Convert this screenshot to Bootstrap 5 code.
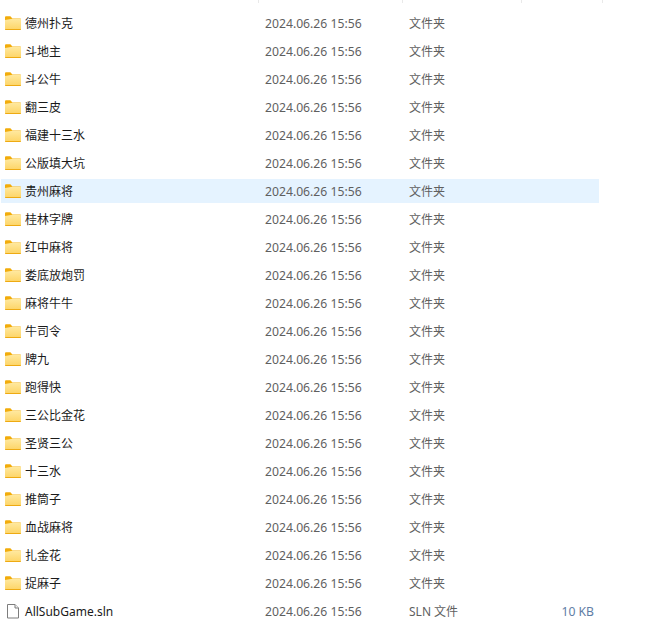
<!DOCTYPE html>
<html lang="zh"><head><meta charset="utf-8"><title>AllSubGame</title>
<link href="https://cdn.jsdelivr.net/npm/bootstrap@5.3.0/dist/css/bootstrap.min.css" rel="stylesheet">
<style>
html,body{height:625px;overflow:hidden;background:#fff}
body{font-family:"Noto Sans","Noto Sans CJK SC",sans-serif;font-size:12px;line-height:24px}
.hdr{height:3px}
.hdr span{display:block;border-right:1px solid #e9e9e9;height:3px}
.h1{width:259px}.h2{width:144px}.h3{width:119px}.h4{width:81px}
.lst{margin:8px 0 0 1px;width:598px;gap:4px}
.rw{height:24px;flex:none}
.rw.sel{background:#e5f3ff}
.cn{width:264px;padding-left:4px;color:#1a1a1a;gap:4px}
.cn svg{flex:none}
.cd{width:144px;color:#5f5f5f;font-size:12.2px;padding-top:1px}
.ct{width:120px;color:#5f5f5f;padding-top:1px}
.cs{width:65px;color:#5f7ea5;text-align:right;font-size:12.2px;padding-top:1px}
.nm{padding-top:2px}
</style></head><body>
<svg width="0" height="0" class="position-absolute"><defs>
<linearGradient id="fg" x1="0" y1="0" x2="0" y2="1"><stop offset="0" stop-color="#ffe9a0"/><stop offset="1" stop-color="#fdd465"/></linearGradient>
<symbol id="fold" viewBox="0 0 16 14"><path d="M0 1.500C0 .7.5.2 1.200.2h4.200l2 2.200H15c.6 0 1 .4 1 1V5H0z" fill="#f2ac0a"/><path d="M0 4l6-.9 1.500-.4H15.200c.5 0 .8.300.8.800V12.800c0 .7-.5 1.200-1.200 1.200H1.200C.5 14 0 13.500 0 12.800z" fill="url(#fg)"/><path d="M0 13h16c0 .6-.5 1-1.200 1H1.200C.5 14 0 13.600 0 13z" fill="#eeaa12"/></symbol>
</defs></svg>
<div class="hdr d-flex"><span class="h1"></span><span class="h2"></span><span class="h3"></span><span class="h4"></span></div>
<div class="lst d-flex flex-column">
<div class="rw d-flex"><div class="cn d-flex align-items-center"><svg width="16" height="14"><use href="#fold"/></svg><span class="nm">德州扑克</span></div><div class="cd">2024.06.26 15:56</div><div class="ct">文件夹</div></div>
<div class="rw d-flex"><div class="cn d-flex align-items-center"><svg width="16" height="14"><use href="#fold"/></svg><span class="nm">斗地主</span></div><div class="cd">2024.06.26 15:56</div><div class="ct">文件夹</div></div>
<div class="rw d-flex"><div class="cn d-flex align-items-center"><svg width="16" height="14"><use href="#fold"/></svg><span class="nm">斗公牛</span></div><div class="cd">2024.06.26 15:56</div><div class="ct">文件夹</div></div>
<div class="rw d-flex"><div class="cn d-flex align-items-center"><svg width="16" height="14"><use href="#fold"/></svg><span class="nm">翻三皮</span></div><div class="cd">2024.06.26 15:56</div><div class="ct">文件夹</div></div>
<div class="rw d-flex"><div class="cn d-flex align-items-center"><svg width="16" height="14"><use href="#fold"/></svg><span class="nm">福建十三水</span></div><div class="cd">2024.06.26 15:56</div><div class="ct">文件夹</div></div>
<div class="rw d-flex"><div class="cn d-flex align-items-center"><svg width="16" height="14"><use href="#fold"/></svg><span class="nm">公版填大坑</span></div><div class="cd">2024.06.26 15:56</div><div class="ct">文件夹</div></div>
<div class="rw sel d-flex"><div class="cn d-flex align-items-center"><svg width="16" height="14"><use href="#fold"/></svg><span class="nm">贵州麻将</span></div><div class="cd">2024.06.26 15:56</div><div class="ct">文件夹</div></div>
<div class="rw d-flex"><div class="cn d-flex align-items-center"><svg width="16" height="14"><use href="#fold"/></svg><span class="nm">桂林字牌</span></div><div class="cd">2024.06.26 15:56</div><div class="ct">文件夹</div></div>
<div class="rw d-flex"><div class="cn d-flex align-items-center"><svg width="16" height="14"><use href="#fold"/></svg><span class="nm">红中麻将</span></div><div class="cd">2024.06.26 15:56</div><div class="ct">文件夹</div></div>
<div class="rw d-flex"><div class="cn d-flex align-items-center"><svg width="16" height="14"><use href="#fold"/></svg><span class="nm">娄底放炮罚</span></div><div class="cd">2024.06.26 15:56</div><div class="ct">文件夹</div></div>
<div class="rw d-flex"><div class="cn d-flex align-items-center"><svg width="16" height="14"><use href="#fold"/></svg><span class="nm">麻将牛牛</span></div><div class="cd">2024.06.26 15:56</div><div class="ct">文件夹</div></div>
<div class="rw d-flex"><div class="cn d-flex align-items-center"><svg width="16" height="14"><use href="#fold"/></svg><span class="nm">牛司令</span></div><div class="cd">2024.06.26 15:56</div><div class="ct">文件夹</div></div>
<div class="rw d-flex"><div class="cn d-flex align-items-center"><svg width="16" height="14"><use href="#fold"/></svg><span class="nm">牌九</span></div><div class="cd">2024.06.26 15:56</div><div class="ct">文件夹</div></div>
<div class="rw d-flex"><div class="cn d-flex align-items-center"><svg width="16" height="14"><use href="#fold"/></svg><span class="nm">跑得快</span></div><div class="cd">2024.06.26 15:56</div><div class="ct">文件夹</div></div>
<div class="rw d-flex"><div class="cn d-flex align-items-center"><svg width="16" height="14"><use href="#fold"/></svg><span class="nm">三公比金花</span></div><div class="cd">2024.06.26 15:56</div><div class="ct">文件夹</div></div>
<div class="rw d-flex"><div class="cn d-flex align-items-center"><svg width="16" height="14"><use href="#fold"/></svg><span class="nm">圣贤三公</span></div><div class="cd">2024.06.26 15:56</div><div class="ct">文件夹</div></div>
<div class="rw d-flex"><div class="cn d-flex align-items-center"><svg width="16" height="14"><use href="#fold"/></svg><span class="nm">十三水</span></div><div class="cd">2024.06.26 15:56</div><div class="ct">文件夹</div></div>
<div class="rw d-flex"><div class="cn d-flex align-items-center"><svg width="16" height="14"><use href="#fold"/></svg><span class="nm">推筒子</span></div><div class="cd">2024.06.26 15:56</div><div class="ct">文件夹</div></div>
<div class="rw d-flex"><div class="cn d-flex align-items-center"><svg width="16" height="14"><use href="#fold"/></svg><span class="nm">血战麻将</span></div><div class="cd">2024.06.26 15:56</div><div class="ct">文件夹</div></div>
<div class="rw d-flex"><div class="cn d-flex align-items-center"><svg width="16" height="14"><use href="#fold"/></svg><span class="nm">扎金花</span></div><div class="cd">2024.06.26 15:56</div><div class="ct">文件夹</div></div>
<div class="rw d-flex"><div class="cn d-flex align-items-center"><svg width="16" height="14"><use href="#fold"/></svg><span class="nm">捉麻子</span></div><div class="cd">2024.06.26 15:56</div><div class="ct">文件夹</div></div>
<div class="rw d-flex"><div class="cn d-flex align-items-center"><svg width="16" height="16" viewBox="0 0 16 16"><path d="M2.500 1.500h7.500l3.500 3.500v10h-11z" fill="#fff" stroke="#7d7d7d"/><path d="M10 1.500v3.500h3.500" fill="#f2f2f2" stroke="#7d7d7d"/></svg><span class="nm">AllSubGame.sln</span></div><div class="cd">2024.06.26 15:56</div><div class="ct">SLN 文件</div><div class="cs">10 KB</div></div>
</div>
</body></html>
